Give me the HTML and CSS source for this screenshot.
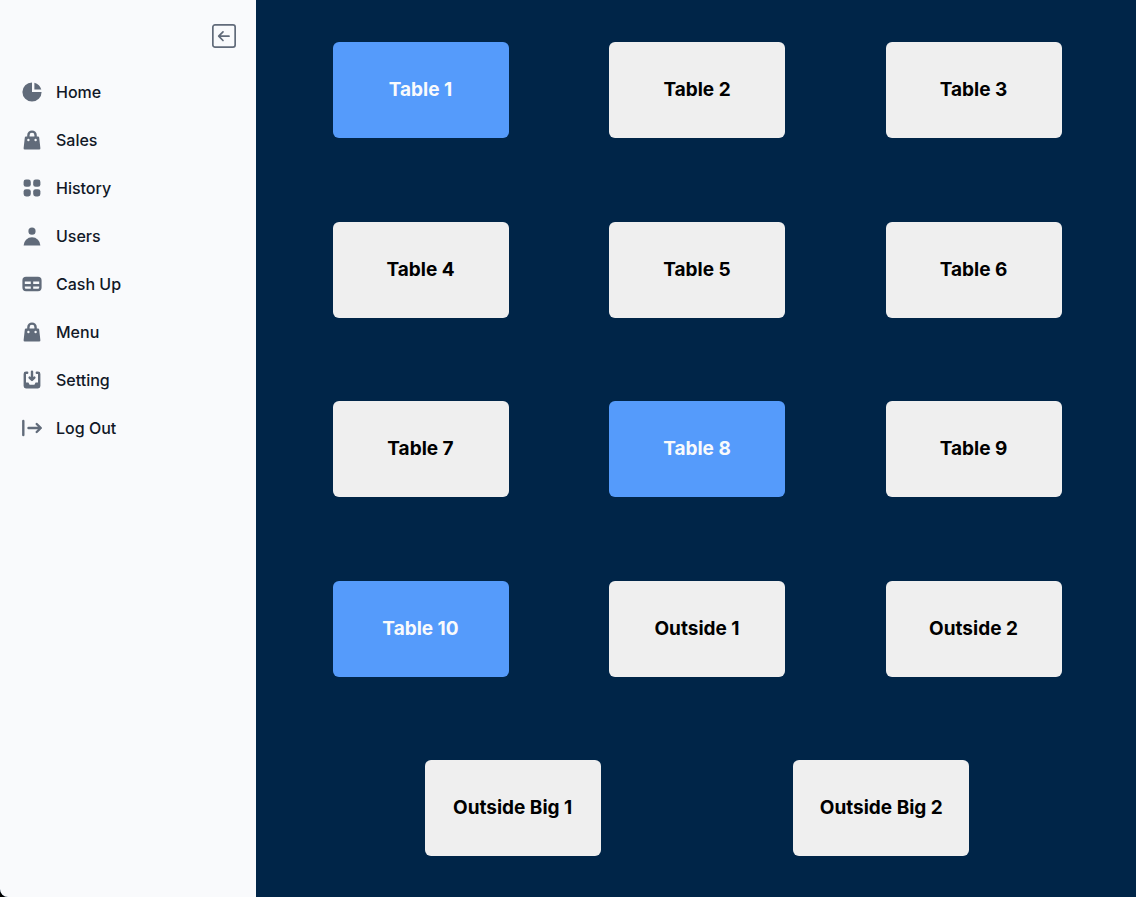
FILE: index.html
```html
<!DOCTYPE html>
<html lang="en">
<head>
<meta charset="utf-8">
<title>Tables</title>
<link rel="stylesheet" href="styles.css">
</head>
<body>
<div class="app">
  <aside class="sidebar">
    <button class="collapse" type="button" aria-label="Collapse sidebar">
      <svg viewBox="0 0 24 24" fill="none" stroke="currentColor" stroke-width="1.7" stroke-linecap="round" stroke-linejoin="round"><rect x=".85" y=".85" width="22.3" height="22.3" rx="2.2"/><path d="M17 12.200H7M11 7.900 6.700 12.200l4.300 4.300"/></svg>
    </button>
    <nav class="menu">
      <a class="item" href="#"><svg class="icon" viewBox="0 0 20 20"><path d="M2 10a8 8 0 018-8v8h8a8 8 0 11-16 0z"/><path d="M12 2.252A8.014 8.014 0 0117.748 8H12V2.252z"/></svg>Home</a>
      <a class="item" href="#"><svg class="icon" viewBox="0 0 20 20"><path fill-rule="evenodd" d="M10 2a4 4 0 00-4 4v1H5a1 1 0 00-.994.89l-1 9A1 1 0 004 18h12a1 1 0 00.994-1.11l-1-9A1 1 0 0015 7h-1V6a4 4 0 00-4-4zm2 5V6a2 2 0 10-4 0v1h4zm-6 3a1 1 0 112 0 1 1 0 01-2 0zm7-1a1 1 0 100 2 1 1 0 000-2z"/></svg>Sales</a>
      <a class="item" href="#"><svg class="icon" viewBox="0 0 20 20"><rect x="3" y="3" width="6" height="6" rx="2"/><rect x="11" y="3" width="6" height="6" rx="2"/><rect x="3" y="11" width="6" height="6" rx="2"/><rect x="11" y="11" width="6" height="6" rx="2"/></svg>History</a>
      <a class="item" href="#"><svg class="icon" viewBox="0 0 20 20"><path d="M10 9a3 3 0 100-6 3 3 0 000 6zm-7 9a7 7 0 1114 0H3z"/></svg>Users</a>
      <a class="item" href="#"><svg class="icon" viewBox="0 0 20 20"><path fill-rule="evenodd" d="M5 4a3 3 0 00-3 3v6a3 3 0 003 3h10a3 3 0 003-3V7a3 3 0 00-3-3H5zm-1 9v-1h5v2H5a1 1 0 01-1-1zm7 1h4a1 1 0 001-1v-1h-5v2zm0-4h5V8h-5v2zM9 8H4v2h5V8z"/></svg>Cash Up</a>
      <a class="item" href="#"><svg class="icon" viewBox="0 0 20 20"><path fill-rule="evenodd" d="M10 2a4 4 0 00-4 4v1H5a1 1 0 00-.994.89l-1 9A1 1 0 004 18h12a1 1 0 00.994-1.11l-1-9A1 1 0 0015 7h-1V6a4 4 0 00-4-4zm2 5V6a2 2 0 10-4 0v1h4zm-6 3a1 1 0 112 0 1 1 0 01-2 0zm7-1a1 1 0 100 2 1 1 0 000-2z"/></svg>Menu</a>
      <a class="item" href="#"><svg class="icon" viewBox="0 0 20 20"><path d="M8.707 7.293a1 1 0 00-1.414 1.414l2 2a1 1 0 001.414 0l2-2a1 1 0 00-1.414-1.414L11 7.586V3a1 1 0 10-2 0v4.586l-.293-.293z"/><path d="M3 5a2 2 0 012-2h1a1 1 0 010 2H5v7h2l1 2h4l1-2h2V5h-1a1 1 0 110-2h1a2 2 0 012 2v10a2 2 0 01-2 2H5a2 2 0 01-2-2V5z"/></svg>Setting</a>
      <a class="item" href="#"><svg class="icon icon-line" viewBox="0 0 24 24"><path d="M3.300 5v14M8.500 12h12M16.700 8l4.100 4-4.100 4"/></svg>Log Out</a>
    </nav>
  </aside>
  <main class="floor">
    <div class="row">
      <button class="table busy" type="button">Table 1</button>
      <button class="table" type="button">Table 2</button>
      <button class="table" type="button">Table 3</button>
    </div>
    <div class="row">
      <button class="table" type="button">Table 4</button>
      <button class="table" type="button">Table 5</button>
      <button class="table" type="button">Table 6</button>
    </div>
    <div class="row">
      <button class="table" type="button">Table 7</button>
      <button class="table busy" type="button">Table 8</button>
      <button class="table" type="button">Table 9</button>
    </div>
    <div class="row">
      <button class="table busy" type="button">Table 10</button>
      <button class="table" type="button">Outside 1</button>
      <button class="table" type="button">Outside 2</button>
    </div>
    <div class="row">
      <button class="table" type="button">Outside Big 1</button>
      <button class="table" type="button">Outside Big 2</button>
    </div>
  </main>
</div>
</body>
</html>
```
FILE: styles.css
```css
* {
  box-sizing: border-box;
}

body {
  margin: 0;
  background: #000;
  font-family: Inter, "Liberation Sans", sans-serif;
}

.app {
  display: flex;
  min-height: 100vh;
  overflow: hidden;
  background: #002548;
  border-bottom-left-radius: 8px;
}

.sidebar {
  display: flex;
  flex: 0 0 256px;
  flex-direction: column;
  padding: 24px 12px;
  background: #f9fafc;
}

.collapse {
  align-self: flex-end;
  width: 24px;
  height: 24px;
  margin-right: 8px;
  padding: 0;
  border: 0;
  background: none;
  color: #616b7a;
}

.collapse svg {
  display: block;
}

.menu {
  display: flex;
  flex-direction: column;
  gap: 8px;
  margin-top: 24px;
}

.item {
  display: flex;
  align-items: center;
  gap: 12px;
  padding: 8px;
  color: #111827;
  font-size: 16px;
  font-weight: 500;
  line-height: 24px;
  text-decoration: none;
}

.icon {
  width: 24px;
  height: 24px;
  fill: #616b7a;
}

.icon-line {
  fill: none;
  stroke: #616b7a;
  stroke-width: 2.4;
  stroke-linecap: round;
  stroke-linejoin: round;
}

.floor {
  display: flex;
  flex: 1;
  flex-direction: column;
  justify-content: space-between;
  padding: 42px 0 41px;
}

.row {
  display: flex;
  justify-content: space-evenly;
  margin: 0 -26px 0 -24px;
}

.table {
  width: 176px;
  height: 96px;
  padding: 0;
  border: 0;
  border-radius: 6px;
  background: #efefef;
  color: #000;
  font-family: inherit;
  font-size: 19px;
  font-weight: 700;
  line-height: 28px;
}

.busy {
  background: #559bfb;
  color: #f9fafb;
}
```
